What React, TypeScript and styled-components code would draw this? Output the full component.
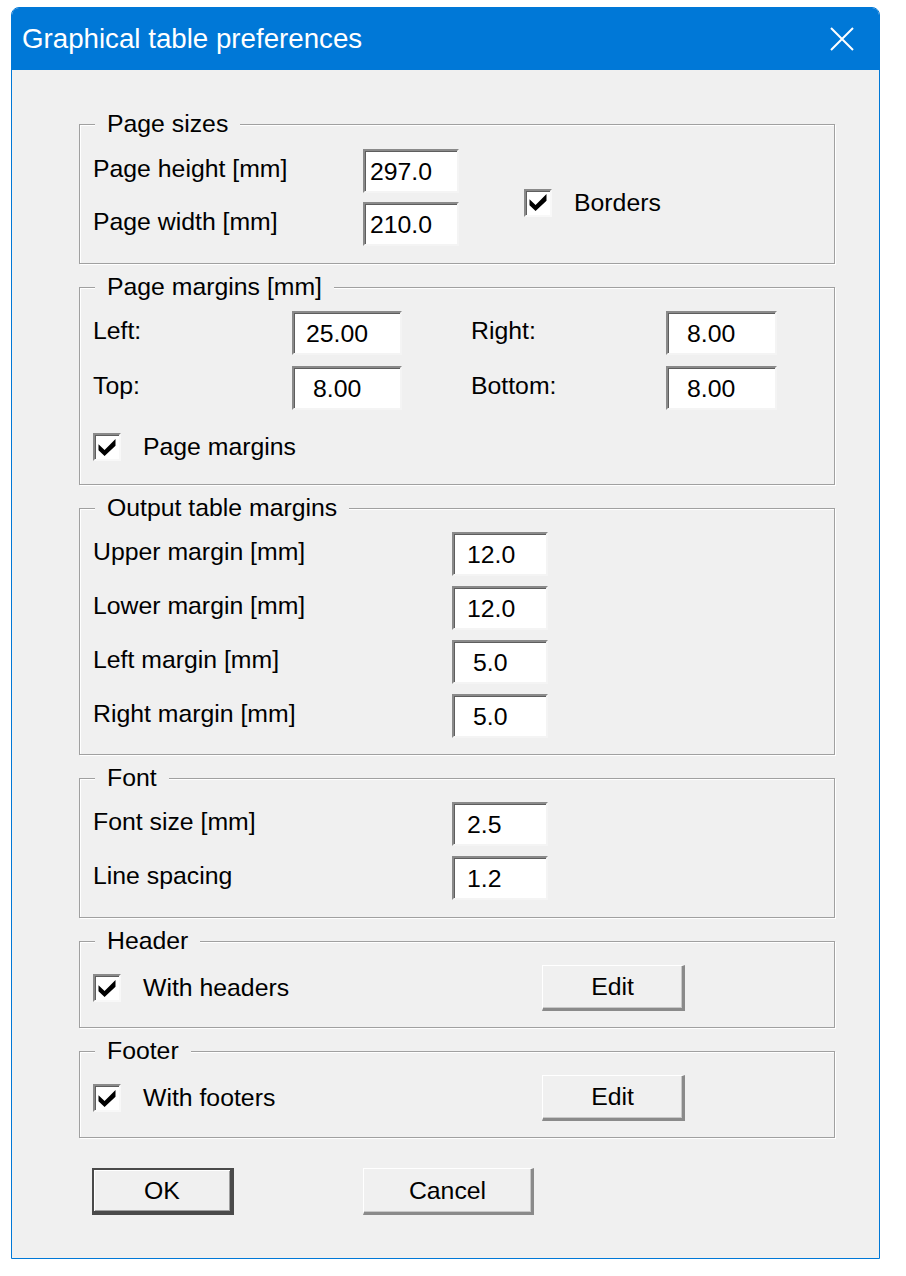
import * as React from 'react';
import styled, { createGlobalStyle } from 'styled-components';

const GlobalStyle = createGlobalStyle`
  body {
    margin: 0;
    background: #fff;
    font-family: "Liberation Sans", Arial, sans-serif;
  }
`;

const Window = styled.div`
  margin: 7px 0 0 11px;
  width: 867px;
  border: 1px solid #0078d7;
  border-radius: 8px 8px 0 0;
  overflow: hidden;
  background: #f0f0f0;
`;

const TitleBar = styled.div`
  height: 62px;
  background: #0078d7;
  display: flex;
  align-items: center;
  justify-content: space-between;
  padding: 0 24px 0 10px;
  color: #fff;
  font-size: 27.7px;
`;

const CloseIcon = () => (
  <svg width="26" height="26" viewBox="0 0 26 26">
    <path d="M2 2 L24 24 M24 2 L2 24" stroke="#fff" strokeWidth="2" />
  </svg>
);

const Body = styled.div`
  padding: 40px 44px 43px 67px;
  display: flex;
  flex-direction: column;
  gap: 9px;
  font-size: 24.8px;
  color: #000;
`;

const Group = styled.fieldset<{ $padBottom?: number }>`
  margin: 0;
  padding: 0 12px ${(p) => p.$padBottom ?? 17}px 13px;
  border: 1px solid #a0a0a0;
  box-shadow: inset 1px 1px 0 #fff, 1px 1px 0 #fff;
  min-width: 0;
`;

const Legend = styled.legend`
  margin-left: 2px;
  padding: 0 12px;
  line-height: 28px;
  background: #f0f0f0;
`;

const Content = styled.div`
  margin-top: 10px;
  display: flex;
  flex-direction: column;
  gap: 10px;
`;

const Row = styled.div`
  display: flex;
  align-items: center;
  height: 44px;
`;

const Label = styled.span<{ $w: number }>`
  width: ${(p) => p.$w}px;
  flex: none;
  line-height: 28px;
  padding-bottom: 5px;
  white-space: nowrap;
`;

const Field = styled.input<{ $w: number; $indent: number }>`
  box-sizing: border-box;
  width: ${(p) => p.$w}px;
  height: 44px;
  flex: none;
  margin: 0;
  padding: 2px 0 0 ${(p) => p.$indent}px;
  font: inherit;
  color: #000;
  background: #fff;
  border-style: solid;
  border-width: 2px;
  border-color: #8a8a8a #f4f4f4 #f4f4f4 #8a8a8a;
  box-shadow: inset 1px 1px 0 #5e5e5e;
  outline: none;
`;

const SizesLayout = styled.div`
  margin-top: 11px;
  display: flex;
  align-items: center;
`;

const Rows = styled.div`
  display: flex;
  flex-direction: column;
  gap: 9px;
`;

const MarginsGrid = styled.div`
  margin-top: 10px;
  display: grid;
  grid-template-columns: 199px 110px 69px 195px 111px;
  grid-auto-rows: 44px;
  row-gap: 11px;
  align-items: center;
`;

const CheckItem = styled.label<{ $offset?: number; $drop?: number }>`
  display: flex;
  align-items: center;
  gap: 22px;
  margin: ${(p) => p.$drop ?? 0}px 0 0 ${(p) => p.$offset ?? 0}px;
  line-height: 28px;
  white-space: nowrap;
`;

const Box = styled.span`
  box-sizing: border-box;
  width: 28px;
  height: 28px;
  flex: none;
  display: flex;
  align-items: center;
  justify-content: center;
  background: #fff;
  border-style: solid;
  border-width: 2px;
  border-color: #8a8a8a #f8f8f8 #f8f8f8 #8a8a8a;
  box-shadow: inset 1px 1px 0 #5e5e5e;
`;

const Check = ({ label, offset, drop }: { label: string; offset?: number; drop?: number }) => (
  <CheckItem $offset={offset} $drop={drop}>
    <Box>
      <svg width="18" height="17" viewBox="0 0 7 7">
        <polygon points="0,2.2 2.5,4.5 7,0 7,2.8 2.5,7 0,4.6" fill="#000" />
      </svg>
    </Box>
    <span>{label}</span>
  </CheckItem>
);

const PageMarginsCheck = styled.div`
  margin-top: 23px;
  height: 28px;
  display: flex;
`;

const EditLayout = styled.div`
  margin-top: 10px;
  display: grid;
  grid-template-columns: 449px 143px;
  align-items: center;
`;

const Button = styled.button<{ $w: number; $default?: boolean }>`
  box-sizing: border-box;
  width: ${(p) => p.$w}px;
  height: 47px;
  margin: 0;
  padding: 0;
  font: inherit;
  color: #000;
  background: #f0f0f0;
  border-style: solid;
  border-width: ${(p) => (p.$default ? '2px 4px 4px 2px' : '1px 3px 3px 1px')};
  border-color: ${(p) =>
    p.$default ? '#4a4a4a' : '#fff #8a8a8a #8a8a8a #fff'};
  box-shadow: ${(p) =>
    p.$default ? 'inset 1px 1px 0 #fff, inset -1px -1px 0 #a0a0a0' : 'inset -1px -1px 0 #c8c8c8'};
`;

const EditButton = styled(Button)`
  height: 46px;
`;

const ButtonBar = styled.div`
  margin-top: 21px;
  padding-left: 13px;
  display: flex;
  gap: 129px;
`;

export default function App() {
  return (
    <>
      <GlobalStyle />
      <Window>
        <TitleBar>
          <span>Graphical table preferences</span>
          <CloseIcon />
        </TitleBar>
        <Body>
          <Group>
            <Legend>Page sizes</Legend>
            <SizesLayout>
              <Rows>
                <Row>
                  <Label $w={270}>Page height [mm]</Label>
                  <Field $w={96} $indent={5} value="297.0" readOnly />
                </Row>
                <Row>
                  <Label $w={270}>Page width [mm]</Label>
                  <Field $w={96} $indent={5} value="210.0" readOnly />
                </Row>
              </Rows>
              <Check label="Borders" offset={65} drop={10} />
            </SizesLayout>
          </Group>

          <Group $padBottom={23}>
            <Legend>Page margins [mm]</Legend>
            <MarginsGrid>
              <Label $w={199}>Left:</Label>
              <Field $w={110} $indent={12} value="25.00" readOnly />
              <span />
              <Label $w={195}>Right:</Label>
              <Field $w={111} $indent={19} value="8.00" readOnly />
              <Label $w={199}>Top:</Label>
              <Field $w={110} $indent={19} value="8.00" readOnly />
              <span />
              <Label $w={195}>Bottom:</Label>
              <Field $w={111} $indent={19} value="8.00" readOnly />
            </MarginsGrid>
            <PageMarginsCheck>
              <Check label="Page margins" />
            </PageMarginsCheck>
          </Group>

          <Group $padBottom={16}>
            <Legend>Output table margins</Legend>
            <Content>
              <Row>
                <Label $w={359}>Upper margin [mm]</Label>
                <Field $w={96} $indent={13} value="12.0" readOnly />
              </Row>
              <Row>
                <Label $w={359}>Lower margin [mm]</Label>
                <Field $w={96} $indent={13} value="12.0" readOnly />
              </Row>
              <Row>
                <Label $w={359}>Left margin [mm]</Label>
                <Field $w={96} $indent={19} value="5.0" readOnly />
              </Row>
              <Row>
                <Label $w={359}>Right margin [mm]</Label>
                <Field $w={96} $indent={19} value="5.0" readOnly />
              </Row>
            </Content>
          </Group>

          <Group>
            <Legend>Font</Legend>
            <Content>
              <Row>
                <Label $w={359}>Font size [mm]</Label>
                <Field $w={96} $indent={13} value="2.5" readOnly />
              </Row>
              <Row>
                <Label $w={359}>Line spacing</Label>
                <Field $w={96} $indent={13} value="1.2" readOnly />
              </Row>
            </Content>
          </Group>

          <Group $padBottom={16}>
            <Legend>Header</Legend>
            <EditLayout>
              <Check label="With headers" />
              <EditButton $w={143}>Edit</EditButton>
            </EditLayout>
          </Group>

          <Group $padBottom={16}>
            <Legend>Footer</Legend>
            <EditLayout>
              <Check label="With footers" />
              <EditButton $w={143}>Edit</EditButton>
            </EditLayout>
          </Group>

          <ButtonBar>
            <Button $w={142} $default>OK</Button>
            <Button $w={171}>Cancel</Button>
          </ButtonBar>
        </Body>
      </Window>
    </>
  );
}
